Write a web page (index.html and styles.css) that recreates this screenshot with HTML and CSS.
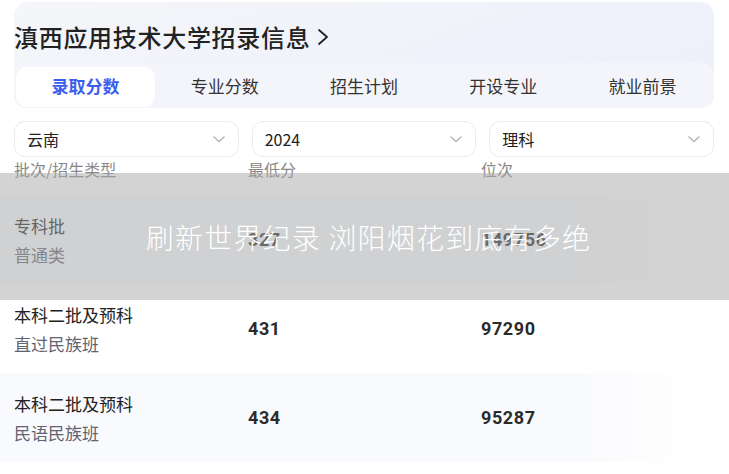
FILE: index.html
```html
<!DOCTYPE html>
<html lang="zh-CN">
<head>
    <meta charset="UTF-8">
    <meta name="viewport" content="width=device-width, initial-scale=1.0">
    <title>滇西应用技术大学招录信息</title>
    <link rel="stylesheet" href="styles.css">
</head>
<body>
    <div class="hero">
        <div class="title">
            滇西应用技术大学招录信息
            <svg class="title-arrow" width="14" height="18" viewBox="0 0 14 18">
                <polyline points="3,2 11,9 3,16" fill="none" stroke="#222" stroke-width="1.8" stroke-linecap="round" stroke-linejoin="round"/>
            </svg>
        </div>
        <div class="tabs">
            <div class="tab active">录取分数</div>
            <div class="tab">专业分数</div>
            <div class="tab">招生计划</div>
            <div class="tab">开设专业</div>
            <div class="tab">就业前景</div>
        </div>
    </div>

    <div class="filters">
        <div class="select"><span>云南</span><svg class="caret" width="14" height="10" viewBox="0 0 14 10"><polyline points="1.5,2.5 7,7.5 12.5,2.5" fill="none" stroke="#aeb2bb" stroke-width="1.3"/></svg></div>
        <div class="select"><span>2024</span><svg class="caret" width="14" height="10" viewBox="0 0 14 10"><polyline points="1.5,2.5 7,7.5 12.5,2.5" fill="none" stroke="#aeb2bb" stroke-width="1.3"/></svg></div>
        <div class="select"><span>理科</span><svg class="caret" width="14" height="10" viewBox="0 0 14 10"><polyline points="1.5,2.5 7,7.5 12.5,2.5" fill="none" stroke="#aeb2bb" stroke-width="1.3"/></svg></div>
    </div>

    <div class="table">
        <div class="thead">
            <div>批次/招生类型</div>
            <div>最低分</div>
            <div>位次</div>
        </div>
        <div class="row shade">
            <div class="batch"><div>专科批</div><div class="sub">普通类</div></div>
            <div class="num">327</div>
            <div class="num">149756</div>
        </div>
        <div class="row">
            <div class="batch"><div>本科二批及预科</div><div class="sub">直过民族班</div></div>
            <div class="num">431</div>
            <div class="num">97290</div>
        </div>
        <div class="row shade">
            <div class="batch"><div>本科二批及预科</div><div class="sub">民语民族班</div></div>
            <div class="num">434</div>
            <div class="num">95287</div>
        </div>
    </div>

    <div class="overlay">刷新世界纪录 浏阳烟花到底有多绝</div>
</body>
</html>
```

FILE: styles.css
```css
body {
    margin: 0;
    padding: 2px 15px 0 14px;
    background: #fff;
    font-family: "Noto Sans CJK SC", "Noto Sans", sans-serif;
    color: #333;
    position: relative;
    height: 472px;
    overflow: hidden;
}

.hero {
    height: 106px;
    border-radius: 14px;
    background: linear-gradient(160deg, #f5f6f9 0%, #eff2fa 60%, #edf0fa 100%);
}

.title {
    padding-top: 20px;
    height: 30px;
    line-height: 30px;
    font-size: 24px;
    font-weight: 500;
    color: #222;
    display: flex;
    align-items: center;
    letter-spacing: 0.7px;
}

.title-arrow {
    margin-left: 6px;
}

.tabs {
    margin-top: 11px;
    height: 40px;
    padding: 4px 2px 1px;
    display: flex;
    background: #f3f5fa;
    border-radius: 12px;
}

.tab {
    flex: 1;
    display: flex;
    align-items: center;
    justify-content: center;
    padding-bottom: 3px;
    font-size: 17px;
    color: #333;
    border-radius: 11px;
}

.tab.active {
    background: #fff;
    color: #3b5ef0;
    font-weight: 700;
}

.filters {
    margin-top: 13px;
    display: flex;
    gap: 13px;
}

.select {
    flex: 1;
    height: 34px;
    border: 1px solid #ebebee;
    border-radius: 11px;
    display: flex;
    align-items: center;
    justify-content: space-between;
    padding: 0 12px 0 12px;
    font-size: 16px;
    color: #222;
}

.table {
    margin-top: 1px;
}

.thead {
    display: grid;
    grid-template-columns: 234px 233px 233px;
    height: 22px;
    line-height: 22px;
    padding-bottom: 15px;
    font-size: 16px;
    color: #888;
}

.row {
    display: grid;
    grid-template-columns: 234px 233px 233px;
    height: 89px;
    align-items: center;
}

.row.shade {
    background: linear-gradient(to right, #f9fafd 0%, #f9fafd 80%, #fff 98%);
    margin-left: -14px;
    padding-left: 14px;
}

.batch {
    font-size: 17px;
    line-height: 29px;
    color: #222;
}

.batch .sub {
    color: #5f6470;
}

.num {
    font-family: Roboto, "Liberation Sans", sans-serif;
    font-weight: 700;
    font-size: 18px;
    letter-spacing: 0.6px;
    color: #2b2b2b;
}

.overlay {
    position: absolute;
    left: 0;
    right: 0;
    top: 173px;
    height: 127px;
    background: rgba(168, 168, 168, 0.5);
    color: #fff;
    font-size: 28px;
    font-weight: 300;
    letter-spacing: 1.2px;
    display: flex;
    align-items: center;
    justify-content: center;
    padding-left: 8px;
}
```
